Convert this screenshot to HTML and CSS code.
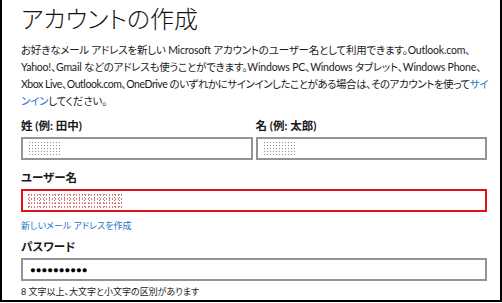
FILE: index.html
```html
<!DOCTYPE html>
<html lang="ja">
<head>
    <meta charset="UTF-8">
    <title>アカウントの作成</title>
    <link rel="stylesheet" href="styles.css">
</head>
<body>
    <div class="frame">
        <h1 class="title">アカウントの作成</h1>
        <p class="intro">お好きなメール アドレスを新しい Microsoft アカウントのユーザー名として利用できます。Outlook.com、<br>Yahoo!、Gmail などのアドレスも使うことができます。Windows PC、Windows タブレット、Windows Phone、<br><span class="tight">Xbox Live、Outlook.com、OneDrive のいずれかにサインインしたことがある場合は、そのアカウントを使って<a class="link" href="#">サイ</a></span><br><a class="link" href="#">ンイン</a>してください。</p>

        <div class="name-row">
            <div class="field">
                <label class="label">姓 (例: 田中)</label>
                <div class="box"><span class="blur blur-short"></span></div>
            </div>
            <div class="field">
                <label class="label">名 (例: 太郎)</label>
                <div class="box"><span class="blur blur-short"></span></div>
            </div>
        </div>

        <label class="label">ユーザー名</label>
        <div class="box box-error"><span class="blur blur-long"></span></div>
        <a class="small-link" href="#">新しいメール アドレスを作成</a>

        <label class="label">パスワード</label>
        <div class="box"><span class="dots">●●●●●●●●●●</span></div>
        <p class="hint">8 文字以上、大文字と小文字の区別があります</p>
    </div>
</body>
</html>
```

FILE: styles.css
```css
body {
    margin: 0;
    background-color: #ffffff;
    font-family: Lato, "Noto Sans CJK JP", sans-serif;
    font-feature-settings: "palt";
    color: #1a1a1a;
}

.frame {
    width: 502px;
    height: 302px;
    box-sizing: border-box;
    border-left: 2px solid #000;
    border-right: 2px solid #000;
    border-bottom: 2px solid #000;
    padding: 0 13px 0 19px;
}

.title {
    margin: 0;
    padding-top: 4px;
    font-size: 24px;
    line-height: 30px;
    font-weight: 300;
    color: #111;
}

.intro {
    margin: 8px 0 0 0;
    font-size: 10.5px;
    line-height: 17px;
    letter-spacing: -0.2px;
    white-space: nowrap;
}

.tight {
    letter-spacing: -0.45px;
}

.link {
    color: #1a73c8;
    text-decoration: none;
}

.name-row {
    display: flex;
    gap: 3px;
    margin-top: 8px;
}

.field {
    flex: 1;
    display: flex;
    flex-direction: column;
}

.label {
    display: block;
    font-size: 11.5px;
    font-weight: bold;
    line-height: 15px;
    margin-bottom: 4px;
}

.box {
    height: 23px;
    box-sizing: border-box;
    border: 2px solid #949494;
    background-color: #fff;
    display: flex;
    align-items: center;
    padding-left: 2px;
}

.box-error {
    border-color: #e0101a;
}

.name-row + .label {
    margin-top: 10px;
}

.blur {
    display: inline-block;
    height: 15px;
    background-image: radial-gradient(circle, #444 0.7px, transparent 1px);
    background-size: 3px 3px;
    opacity: 0.6;
}

.blur-short {
    width: 34px;
    margin-left: 3px;
}

.blur-long {
    width: 96px;
    margin-left: 2px;
    background-image: radial-gradient(circle, #c22 0.7px, transparent 1px), radial-gradient(circle, #333 0.6px, transparent 1px);
    background-size: 3px 4px, 5px 3px;
}

.small-link {
    display: block;
    margin-top: 7px;
    margin-bottom: 7px;
    font-size: 9px;
    line-height: 13px;
    color: #1a73c8;
    text-decoration: none;
}

.dots {
    font-family: "Liberation Sans", sans-serif;
    font-size: 9.5px;
    margin-left: 5px;
    color: #000;
}

.hint {
    margin: 4px 0 0 0;
    font-size: 9px;
    line-height: 13px;
}
```
